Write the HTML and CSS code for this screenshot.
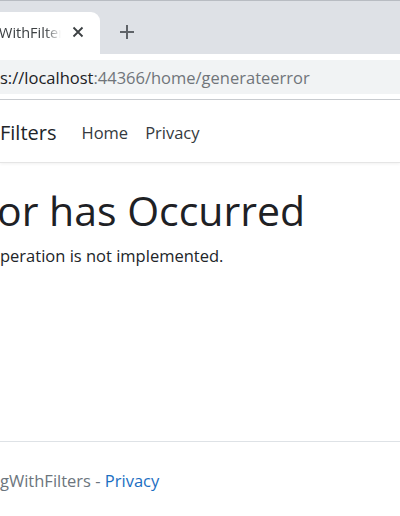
FILE: index.html
```html
<!DOCTYPE html>
<html lang="en">
<head>
<meta charset="utf-8">
<title>Error</title>
<link rel="stylesheet" href="styles.css">
</head>
<body>
<div class="chrome">
  <div class="tabstrip">
    <div class="tab">
      <span class="tab-title">WithFilters</span>
      <svg class="tab-close" width="12" height="12" viewBox="0 0 12 12"><path d="M1.5 1.5 L10.5 10.5 M10.5 1.5 L1.5 10.5" stroke="#3c4043" stroke-width="1.8" fill="none"/></svg>
    </div>
    <svg class="newtab" width="16" height="16" viewBox="0 0 16 16"><path d="M8 1 V15 M1 8 H15" stroke="#5f6368" stroke-width="2" fill="none"/></svg>
  </div>
  <div class="toolbar">
    <div class="omnibox"><span class="url-host">s://localhost</span><span class="url-rest">:44366/home/generateerror</span></div>
  </div>
</div>
<header class="navbar">
  <span class="brand">Filters</span>
  <nav class="nav">
    <a class="nav-link">Home</a>
    <a class="nav-link">Privacy</a>
  </nav>
</header>
<main class="content">
  <h1 class="title">or has Occurred</h1>
  <p class="message">peration is not implemented.</p>
</main>
<footer class="footer">
  <span class="footer-text">gWithFilters - <a class="footer-link">Privacy</a></span>
</footer>
</body>
</html>
```
FILE: styles.css
```css
html, body {
  margin: 0;
  padding: 0;
  width: 400px;
  height: 516px;
  overflow: hidden;
  background: #fff;
  font-family: "Open Sans", "Noto Sans", sans-serif;
  color: #212529;
}
.chrome {
  display: flex;
  flex-direction: column;
}
.tabstrip {
  height: 54px;
  background: #dee1e6;
  border-top: 1px solid #b8bcc2;
  display: flex;
  align-items: flex-end;
  box-sizing: border-box;
}
.tab {
  width: 100px;
  height: 42px;
  background: #fff;
  border-radius: 0 9px 0 0;
  display: flex;
  align-items: center;
  box-sizing: border-box;
  padding-bottom: 2px;
}
.tab-title {
  width: 64px;
  overflow: hidden;
  white-space: nowrap;
  font-size: 14.5px;
  color: #3c4043;
  margin-left: -1px;
  -webkit-mask-image: linear-gradient(to right, #000 46px, transparent 62px);
  mask-image: linear-gradient(to right, #000 46px, transparent 62px);
}
.tab-close {
  margin-left: 9px;
}
.newtab {
  margin-left: 19px;
  margin-bottom: 14px;
}
.toolbar {
  height: 46px;
  background: #fff;
  border-bottom: 1px solid #c8cbcf;
  box-sizing: border-box;
  padding-top: 6px;
}
.omnibox {
  height: 34px;
  background: #f1f3f4;
  display: flex;
  align-items: center;
  font-size: 16.5px;
  white-space: nowrap;
}
.url-host { color: #202124; }
.url-rest { color: #70757a; }
.navbar {
  height: 63px;
  display: flex;
  align-items: center;
  border-bottom: 1px solid #e5e5e5;
  box-shadow: 0 1px 3px rgba(0,0,0,0.06);
  box-sizing: border-box;
  padding-top: 3px;
}
.brand {
  font-size: 20px;
  color: #212529;
  margin-right: 17px;
}
.nav {
  display: flex;
}
.nav-link {
  font-size: 16.5px;
  color: #343a40;
  padding: 0 8px;
  text-decoration: none;
}
.nav-link + .nav-link {
  padding-left: 9px;
}
.content {
  padding-top: 23px;
  height: 279px;
  box-sizing: border-box;
  border-bottom: 1px solid #dee2e6;
}
.title {
  margin: 0 0 0 -3px;
  font-size: 41px;
  font-weight: 500;
  line-height: 1.2;
  color: #1e2125;
}
.message {
  margin: 9px 0 0 0;
  font-size: 16.5px;
  color: #212529;
}
.footer {
  padding-top: 27px;
}
.footer-text {
  font-size: 16.5px;
  color: #6c757d;
}
.footer-link {
  color: #1b6ec2;
  text-decoration: none;
}
```
